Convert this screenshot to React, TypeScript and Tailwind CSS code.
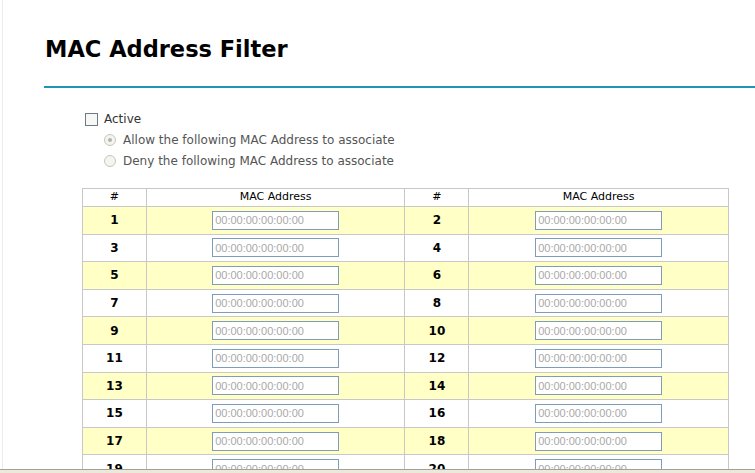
import React from 'react';

const font = { fontFamily: '"DejaVu Sans", Verdana, sans-serif' };
const inputFont = { fontFamily: '"Liberation Sans", Arial, sans-serif' };

function MacInput() {
  return (
    <input
      type="text"
      placeholder="00:00:00:00:00:00"
      className="h-[19px] w-[127px] border border-[#7f9db9] bg-white px-[2px] text-[11px] leading-none text-black placeholder:text-[#a8a8a8] outline-none"
      style={inputFont}
    />
  );
}

function Radio({ checked, label }: { checked?: boolean; label: string }) {
  return (
    <div className="flex h-[21px] items-center gap-[7px] pl-[21px]">
      <span className="flex h-[12px] w-[12px] items-center justify-center rounded-full border border-[#c9c7ba] bg-[#f4f4f0]">
        {checked && <span className="h-[4px] w-[4px] rounded-full bg-[#b5b3a8]" />}
      </span>
      <span className="text-[12px] text-[#555]">{label}</span>
    </div>
  );
}

export default function App() {
  const rows = Array.from({ length: 16 }, (_, i) => [i * 2 + 1, i * 2 + 2]);

  return (
    <div className="flex h-[473px] w-[755px] flex-col overflow-hidden bg-white" style={font}>
      <div className="flex min-h-0 flex-1 overflow-hidden">
        <div className="w-[3px] shrink-0 border-r border-[#ececec]" />
        <div className="min-w-0 flex-1">
          <h1 className="pl-[42px] pt-[36px] text-[22.5px] font-bold leading-[26px] text-black">
            MAC Address Filter
          </h1>
          <div className="ml-[41px] mt-[24px] h-[2px] bg-[#1f95b4]" />

          <div className="pl-[80px] pt-[21px]">
            <div className="flex h-[20px] items-center gap-[6px] pl-[2px]">
              <span className="h-[13px] w-[13px] border border-[#6c7a86] bg-[#f7f7f5]" />
              <span className="text-[12px] text-[#333]">Active</span>
            </div>
            <Radio checked label="Allow the following MAC Address to associate" />
            <Radio label="Deny the following MAC Address to associate" />
          </div>

          <table className="ml-[79px] mt-[17px] w-[647px] border-collapse border border-[#a9a9a9] text-[11px] text-black">
            <colgroup>
              <col className="w-[64px]" />
              <col className="w-[259px]" />
              <col className="w-[64px]" />
              <col className="w-[260px]" />
            </colgroup>
            <thead>
              <tr className="h-[18px] bg-white">
                <th className="border border-[#c8c8c8] font-normal">#</th>
                <th className="border border-[#c8c8c8] font-normal">MAC Address</th>
                <th className="border border-[#c8c8c8] font-normal">#</th>
                <th className="border border-[#c8c8c8] font-normal">MAC Address</th>
              </tr>
            </thead>
            <tbody>
              {rows.map(([a, b], i) => (
                <tr key={a} className={i % 2 === 0 ? 'h-[27.6px] bg-[#ffffc6]' : 'h-[27.6px] bg-white'}>
                  <td className="border border-[#c8c8c8] text-center text-[12px] font-bold">{a}</td>
                  <td className="border border-[#c8c8c8] text-center">
                    <MacInput />
                  </td>
                  <td className="border border-[#c8c8c8] text-center text-[12px] font-bold">{b}</td>
                  <td className="border border-[#c8c8c8] text-center">
                    <MacInput />
                  </td>
                </tr>
              ))}
            </tbody>
          </table>
        </div>
      </div>
      <div className="h-[4px] shrink-0 border-t border-[#a0a0a0] bg-[#ece9d8]" />
    </div>
  );
}
